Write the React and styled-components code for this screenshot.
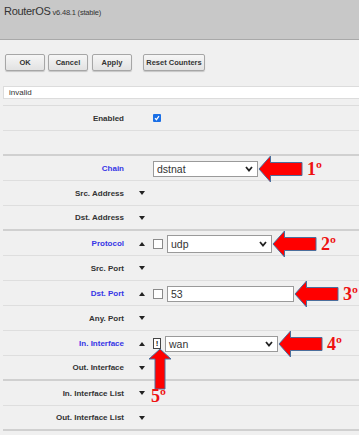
import React from 'react';
import styled, { createGlobalStyle } from 'styled-components';

const GlobalStyle = createGlobalStyle`
  body {
    margin: 0;
    background: #f0f0f0;
    font-family: "Liberation Sans", Arial, sans-serif;
    color: #333;
    overflow-x: hidden;
  }
`;

const Header = styled.div`
  height: 40px;
  box-sizing: border-box;
  background: #c8c8c8;
  border-bottom: 1px solid #a9a9a9;
  padding: 5px 4px 0;
  display: flex;
  align-items: baseline;
  gap: 2px;
`;

const Brand = styled.span`
  font-size: 11px;
  letter-spacing: -0.3px;
  color: #333;
`;

const Version = styled.span`
  font-size: 7.5px;
  letter-spacing: -0.2px;
  color: #333;
`;

const Toolbar = styled.div`
  display: flex;
  padding: 14px 0 0 5px;
`;

const Button = styled.button`
  height: 17px;
  width: ${p => p.$w}px;
  margin-left: ${p => p.$gap || 0}px;
  padding: 0;
  font-family: "Liberation Sans", Arial, sans-serif;
  font-size: 7.5px;
  font-weight: bold;
  color: #333;
  background: linear-gradient(#f6f6f6, #e2e2e2);
  border: 1px solid #a6a6a6;
  border-radius: 2px;
  box-shadow: 0 1px 1px rgba(0, 0, 0, 0.18);
`;

const Status = styled.div`
  margin: 15px -2px 0 3px;
  height: 13px;
  box-sizing: border-box;
  background: #fff;
  border: 1px solid #dcdcdc;
  font-size: 8px;
  line-height: 11px;
  padding-left: 5px;
`;

const Form = styled.div`
  margin: 6px 0 0 3px;
  border-top: 1px solid #dcdcdc;
`;

const Row = styled.div`
  display: grid;
  grid-template-columns: 121px 29px 1fr;
  align-items: center;
  height: 25px;
  box-sizing: border-box;
  border-bottom: ${p => (p.$section ? '2px solid #d0d0d0' : '1px solid #dedede')};
`;

const Label = styled.div`
  text-align: right;
  font-size: 8px;
  font-weight: bold;
  color: ${p => (p.$blue ? '#3535e6' : '#333')};
`;

const ToggleCell = styled.div`
  display: flex;
  align-items: center;
  padding-left: 15px;
`;

const Toggle = styled.span`
  width: 0;
  height: 0;
  border-left: 3.5px solid transparent;
  border-right: 3.5px solid transparent;
  ${p => (p.$open ? 'border-bottom: 4px solid #222;' : 'border-top: 4px solid #222;')}
`;

const Value = styled.div`
  display: flex;
  align-items: center;
  gap: 4px;
  position: relative;
`;

const Checked = styled.span`
  width: 8px;
  height: 8px;
  border-radius: 1px;
  background: #1a6fe6;
  display: flex;
  align-items: center;
  justify-content: center;
`;

const Box = styled.span`
  width: 8px;
  height: 8px;
  background: #fff;
  border: 1px solid #8a8a8a;
`;

const Bang = styled.span`
  position: relative;
  width: 6px;
  height: 9px;
  background: #fff;
  border: 1px solid #444;
  font-size: 8px;
  font-weight: bold;
  line-height: 9px;
  text-align: center;
  color: #222;
`;

const Select = styled.div`
  width: ${p => p.$w}px;
  height: ${p => p.$h || 16}px;
  box-sizing: border-box;
  background: #fff;
  border: 1px solid #9a9a9a;
  display: flex;
  align-items: center;
  justify-content: space-between;
  padding: 0 4px 0 3px;
  font-size: 10.5px;
  color: #333;
`;

const Callout = styled.div`
  display: flex;
  align-items: center;
  margin-left: -4px;
  height: 25px;
`;

const Num = styled.span`
  margin-left: 3px;
  font-family: "Liberation Serif", "Times New Roman", serif;
  font-size: 18px;
  font-weight: bold;
  color: #ee1111;
  line-height: 1;
`;

const UpCallout = styled.div`
  position: absolute;
  left: -6px;
  top: 100%;
  width: 24px;
  display: flex;
  flex-direction: column;
  align-items: center;
  pointer-events: none;
`;

const UpNum = styled(Num)`
  margin: -3px 3px 0 0;
`;

const Chevron = () => (
  <svg width="8" height="6" viewBox="0 0 8 6">
    <polyline points="1,1 4,4.5 7,1" fill="none" stroke="#222" strokeWidth="1.8" />
  </svg>
);

const LeftArrow = () => (
  <svg width="46" height="28" viewBox="0 0 46 28" style={{ overflow: 'visible' }}>
    <path d="M1,14 L12.5,1 L12.5,7.5 L44,7.5 L44,20.5 L12.5,20.5 L12.5,27 Z" fill="#ff0000" stroke="#4a6e9c" strokeWidth="1" />
  </svg>
);

const UpArrow = () => (
  <svg width="24" height="42" viewBox="0 0 24 42" style={{ overflow: 'visible' }}>
    <path d="M12,1 L23,11 L17,11 L17,41 L7,41 L7,11 L1,11 Z" fill="#ff0000" stroke="#4a6e9c" strokeWidth="1" />
  </svg>
);

const Mark = ({ n }) => (
  <Callout>
    <LeftArrow />
    <Num>{n}º</Num>
  </Callout>
);

const Field = ({ label, blue, toggle, section, children }) => (
  <Row $section={section}>
    <Label $blue={blue}>{label}</Label>
    <ToggleCell>{toggle && <Toggle $open={toggle === 'up'} />}</ToggleCell>
    <Value>{children}</Value>
  </Row>
);

export default function App() {
  return (
    <>
      <GlobalStyle />
      <Header>
        <Brand>RouterOS</Brand>
        <Version>v6.48.1 (stable)</Version>
      </Header>
      <Toolbar>
        <Button $w={40}>OK</Button>
        <Button $w={40} $gap={3}>Cancel</Button>
        <Button $w={40} $gap={4}>Apply</Button>
        <Button $w={62} $gap={11}>Reset Counters</Button>
      </Toolbar>
      <Status>invalid</Status>
      <Form>
        <Field label="Enabled">
          <Checked>
            <svg width="6" height="6" viewBox="0 0 6 6">
              <polyline points="1,3.2 2.4,4.7 5,1.2" fill="none" stroke="#fff" strokeWidth="1.2" />
            </svg>
          </Checked>
        </Field>
        <Field label="" section />
        <Field label="Chain" blue>
          <Select $w={105}>dstnat<Chevron /></Select>
          <Mark n="1" />
        </Field>
        <Field label="Src. Address" toggle="down" />
        <Field label="Dst. Address" toggle="down" section />
        <Field label="Protocol" blue toggle="up">
          <Box />
          <Select $w={105} $h={18}>udp<Chevron /></Select>
          <Mark n="2" />
        </Field>
        <Field label="Src. Port" toggle="down" />
        <Field label="Dst. Port" blue toggle="up">
          <Box />
          <Select $w={127}>53</Select>
          <Mark n="3" />
        </Field>
        <Field label="Any. Port" toggle="down" />
        <Field label="In. Interface" blue toggle="up">
          <Bang>
            !
            <UpCallout>
              <UpArrow />
              <UpNum>5º</UpNum>
            </UpCallout>
          </Bang>
          <Select $w={113}>wan<Chevron /></Select>
          <Mark n="4" />
        </Field>
        <Field label="Out. Interface" toggle="down" section />
        <Field label="In. Interface List" toggle="down" />
        <Field label="Out. Interface List" toggle="down" section />
      </Form>
    </>
  );
}
